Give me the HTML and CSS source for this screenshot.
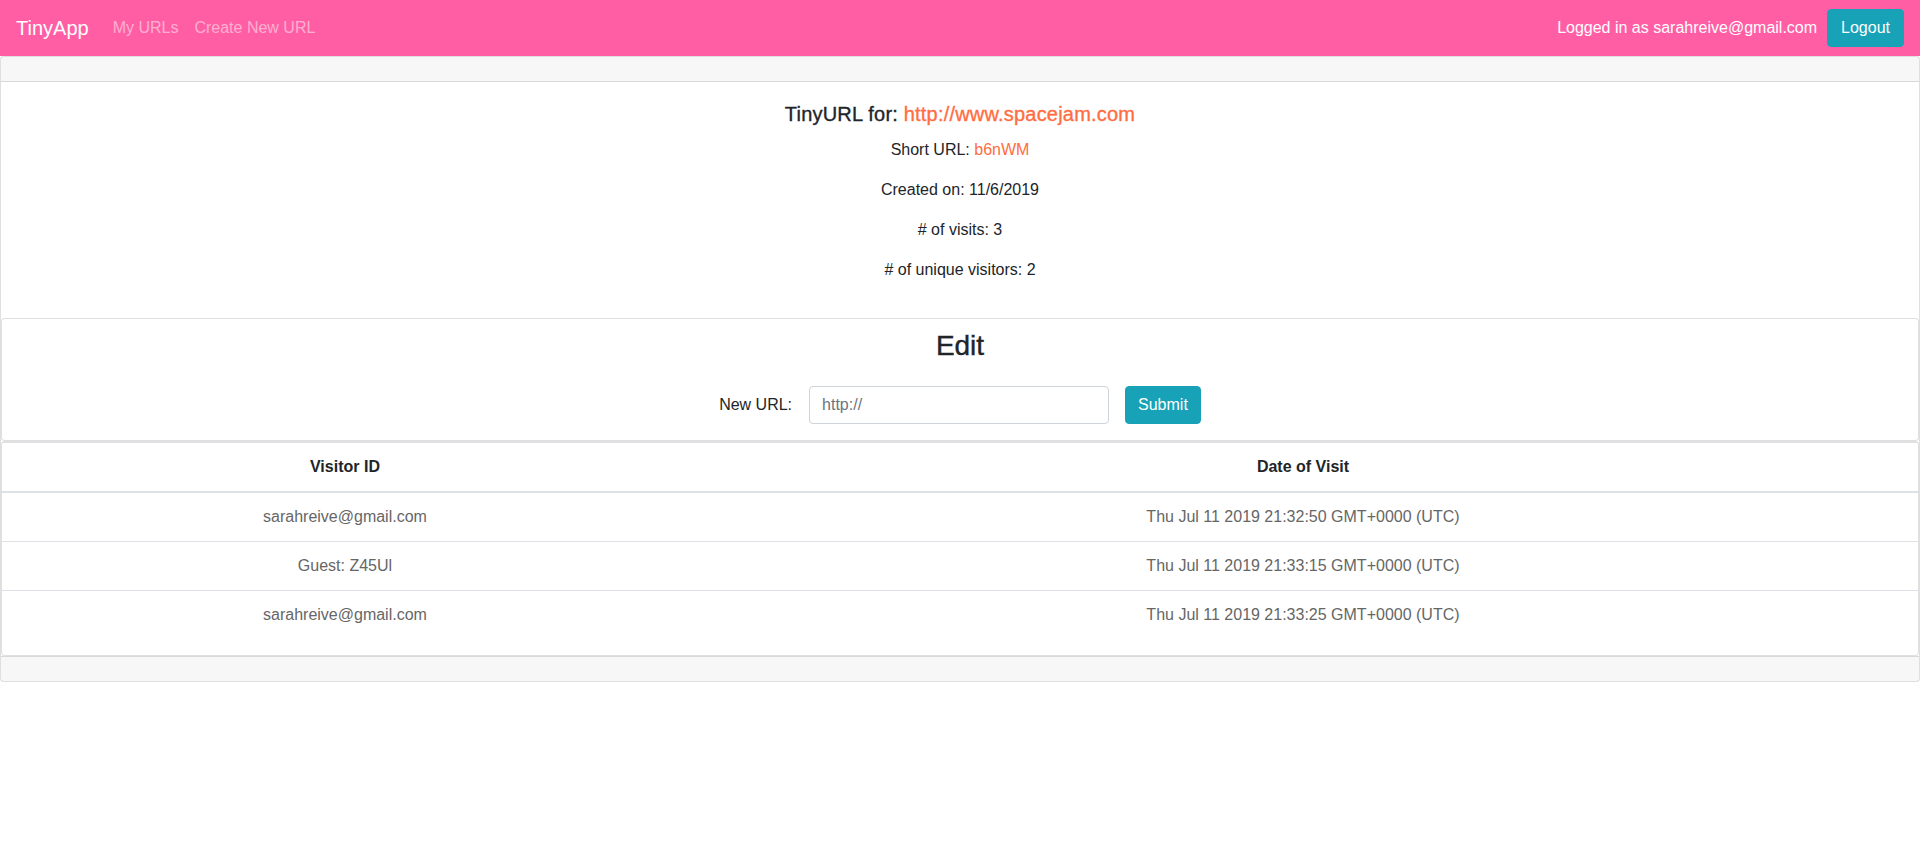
FILE: index.html
```html
<!DOCTYPE html>
<html lang="en">
<head>
<meta charset="utf-8">
<title>TinyApp</title>
<link rel="stylesheet" href="styles.css">
</head>
<body>
<nav class="navbar">
  <a class="brand" href="#">TinyApp</a>
  <ul class="nav-links">
    <li><a href="#">My URLs</a></li>
    <li><a href="#">Create New URL</a></li>
  </ul>
  <div class="nav-right">
    <span class="user">Logged in as sarahreive@gmail.com</span>
    <button class="btn btn-logout" type="button">Logout</button>
  </div>
</nav>

<div class="card outer">
  <div class="card-header"></div>
  <div class="card-body info">
    <h5 class="title">TinyURL for: <a class="accent" href="#">http://www.spacejam.com</a></h5>
    <p>Short URL: <a class="accent" href="#">b6nWM</a></p>
    <p>Created on: 11/6/2019</p>
    <p># of visits: 3</p>
    <p># of unique visitors: 2</p>
  </div>
  <div class="card edit">
    <h3 class="edit-title">Edit</h3>
    <form class="edit-form">
      <label class="edit-label" for="longURL">New URL:</label>
      <input class="form-control" id="longURL" type="text" placeholder="http://">
      <button class="btn" type="button">Submit</button>
    </form>
  </div>
  <div class="card table-card">
    <table class="visits">
      <thead>
        <tr><th class="col-id">Visitor ID</th><th>Date of Visit</th></tr>
      </thead>
      <tbody>
        <tr><td>sarahreive@gmail.com</td><td>Thu Jul 11 2019 21:32:50 GMT+0000 (UTC)</td></tr>
        <tr><td>Guest: Z45Ul</td><td>Thu Jul 11 2019 21:33:15 GMT+0000 (UTC)</td></tr>
        <tr><td>sarahreive@gmail.com</td><td>Thu Jul 11 2019 21:33:25 GMT+0000 (UTC)</td></tr>
      </tbody>
    </table>
  </div>
  <div class="card-footer"></div>
</div>
</body>
</html>
```

FILE: styles.css
```css
* { box-sizing: border-box; }

body {
  margin: 0;
  font-family: "Liberation Sans", Arial, sans-serif;
  font-size: 16px;
  line-height: 1.5;
  color: #212529;
  background: #fff;
}

a { text-decoration: none; }

.navbar {
  display: flex;
  align-items: center;
  height: 56px;
  padding: 8px 16px;
  background: #ff5ea5;
}

.brand {
  font-size: 20px;
  line-height: 30px;
  color: #fff;
  margin-right: 16px;
}

.nav-links {
  display: flex;
  list-style: none;
  margin: 0;
  padding: 0;
}

.nav-links a {
  display: block;
  padding: 8px;
  color: rgba(255, 255, 255, 0.5);
}

.nav-right {
  margin-left: auto;
  display: flex;
  align-items: center;
}

.user {
  color: #fff;
  margin-right: 10px;
}

.btn {
  font-family: inherit;
  font-size: 16px;
  line-height: 24px;
  padding: 6px 12px;
  color: #fff;
  background: #17a2b8;
  border: 1px solid #17a2b8;
  border-radius: 4px;
  cursor: pointer;
}

.btn-logout { padding: 6px 13px; }

.card {
  border: 1px solid rgba(0, 0, 0, 0.125);
  border-radius: 4px;
  background: #fff;
}

.card-header {
  height: 25px;
  background: rgba(0, 0, 0, 0.03);
  border-bottom: 1px solid rgba(0, 0, 0, 0.125);
}

.card-footer {
  height: 25px;
  background: rgba(0, 0, 0, 0.03);
  border-top: 1px solid rgba(0, 0, 0, 0.125);
}

.card-body {
  padding: 20px;
  text-align: center;
}

.title {
  font-size: 20px;
  font-weight: 500;
  line-height: 1.2;
  margin: 0 0 12px;
  letter-spacing: 0.2px;
  -webkit-text-stroke: 0.35px currentColor;
}

.title .accent { -webkit-text-stroke: 0.35px #ff6d41; }

.accent { color: #ff6d41; }

.info p { margin: 0 0 16px; }

.edit {
  padding: 10px 20px 16px;
  text-align: center;
}

.edit-title {
  font-size: 28px;
  font-weight: 500;
  line-height: 1.2;
  margin: 0 0 23px;
  -webkit-text-stroke: 0.4px currentColor;
}

.edit-form {
  display: flex;
  justify-content: center;
  align-items: center;
}

.edit-label { margin-right: 17px; }

.form-control {
  width: 300px;
  height: 38px;
  padding: 6px 12px;
  font-family: inherit;
  font-size: 16px;
  color: #495057;
  border: 1px solid #ced4da;
  border-radius: 4px;
  margin-right: 16px;
}

.form-control::placeholder { color: #6c757d; }

.visits {
  width: 100%;
  border-collapse: collapse;
  margin-bottom: 16px;
  text-align: center;
}

.visits th,
.visits td {
  padding: 12px;
  border-top: 1px solid #dee2e6;
}

.visits th {
  font-weight: bold;
  border-bottom: 2px solid #dee2e6;
}

.visits td { color: #666; }

.col-id { width: 35.8%; }
```
